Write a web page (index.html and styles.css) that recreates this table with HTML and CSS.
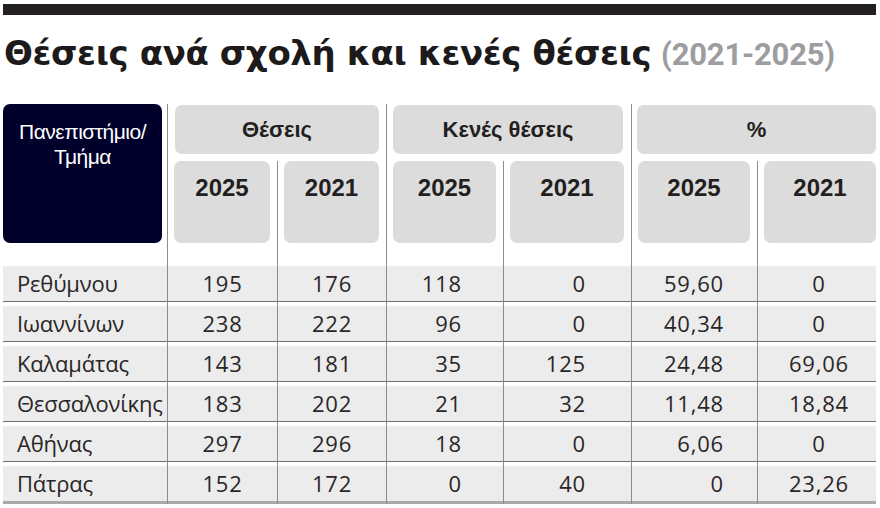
FILE: index.html
```html
<!DOCTYPE html>
<html lang="el">
<head>
<meta charset="utf-8">
<title>Θέσεις ανά σχολή και κενές θέσεις</title>
<link rel="stylesheet" href="styles.css">
</head>
<body>
<div class="page">
  <div class="topbar"></div>
  <h1 class="title"><span class="title-main">Θέσεις ανά σχολή και κενές θέσεις</span> <span class="years">(2021-2025)</span></h1>
  <div class="table">
    <div class="thead">
      <div class="h-uni"><div class="box navy">Πανεπιστήμιο/<br>Τμήμα</div></div>
      <div class="h-group"><div class="box group">Θέσεις</div></div>
      <div class="h-group"><div class="box group">Κενές θέσεις</div></div>
      <div class="h-group last-col"><div class="box group">%</div></div>
      <div class="h-year"><div class="box year">2025</div></div>
      <div class="h-year"><div class="box year">2021</div></div>
      <div class="h-year"><div class="box year">2025</div></div>
      <div class="h-year"><div class="box year">2021</div></div>
      <div class="h-year"><div class="box year">2025</div></div>
      <div class="h-year last-col"><div class="box year">2021</div></div>
    </div>
    <div class="row"><div class="c name">Ρεθύμνου</div><div class="c ctr">195</div><div class="c ctr">176</div><div class="c r4">118</div><div class="c r5">0</div><div class="c r6">59,60</div><div class="c c7">0</div></div>
    <div class="row"><div class="c name">Ιωαννίνων</div><div class="c ctr">238</div><div class="c ctr">222</div><div class="c r4">96</div><div class="c r5">0</div><div class="c r6">40,34</div><div class="c c7">0</div></div>
    <div class="row"><div class="c name">Καλαμάτας</div><div class="c ctr">143</div><div class="c ctr">181</div><div class="c r4">35</div><div class="c r5">125</div><div class="c r6">24,48</div><div class="c c7">69,06</div></div>
    <div class="row"><div class="c name">Θεσσαλονίκης</div><div class="c ctr">183</div><div class="c ctr">202</div><div class="c r4">21</div><div class="c r5">32</div><div class="c r6">11,48</div><div class="c c7">18,84</div></div>
    <div class="row"><div class="c name">Αθήνας</div><div class="c ctr">297</div><div class="c ctr">296</div><div class="c r4">18</div><div class="c r5">0</div><div class="c r6">6,06</div><div class="c c7">0</div></div>
    <div class="row row-last"><div class="c name">Πάτρας</div><div class="c ctr">152</div><div class="c ctr">172</div><div class="c r4">0</div><div class="c r5">40</div><div class="c r6">0</div><div class="c c7">23,26</div></div>
  </div>
</div>
</body>
</html>
```

FILE: styles.css
```css
* { box-sizing: border-box; }
html, body { margin: 0; padding: 0; background: #ffffff; }
body { width: 880px; height: 508px; overflow: hidden; font-family: "Open Sans", "DejaVu Sans", sans-serif; color: #231f20; }

.page { padding: 4px 4px 0 3px; }

.topbar { height: 11px; width: 873px; background: #231f20; }

.title {
  margin: 18px 0 0 1px;
  height: 71px;
  font-family: "DejaVu Sans", Roboto, sans-serif;
  font-weight: 700;
  font-size: 34px;
  line-height: 40px;
  white-space: nowrap;
  color: #1c1a1b;
}
.title-main { letter-spacing: -0.4px; }
.years { font-family: Roboto, "DejaVu Sans", sans-serif; color: #9d9d9f; font-size: 31px; margin-left: -2px; letter-spacing: -0.2px; }

.table { width: 873px; }

.thead, .row {
  display: grid;
  grid-template-columns: 164px 110px 109px 117px 128px 126px 119px;
}
.thead { grid-template-rows: 57px 105px; }

.h-uni { grid-row: 1 / span 2; grid-column: 1; padding: 0 5px 23px 0; }
.h-group { grid-row: 1; border-left: 1px solid #8c8c8c; padding: 1px 7px 7px 7px; }
.h-year { grid-row: 2; border-left: 1px solid #8c8c8c; padding: 0 7px 23px 6px; }
.h-group:nth-child(2) { grid-column: 2 / span 2; }
.h-group:nth-child(3) { grid-column: 4 / span 2; padding-left: 6px; padding-right: 8px; }
.h-group:nth-child(4) { grid-column: 6 / span 2; padding-left: 5px; }
.last-col { padding-right: 0; }

.box { height: 100%; border-radius: 7px; text-align: center; }
.navy {
  background: #00002a;
  color: #ffffff;
  font-family: "Liberation Sans Narrow", "Liberation Sans", sans-serif;
  font-size: 21px;
  line-height: 25px;
  padding-top: 15px;
  letter-spacing: -0.5px;
}
.group {
  background: #dcdcdd;
  font-family: "Liberation Sans Narrow", "Liberation Sans", sans-serif;
  font-weight: 700;
  font-size: 22px;
  line-height: 50px;
  color: #231f20;
}
.year {
  background: #dcdcdd;
  font-family: "Liberation Sans Narrow", "Liberation Sans", sans-serif;
  font-weight: 700;
  font-size: 24px;
  line-height: 30px;
  padding-top: 12px;
  color: #231f20;
}

.row {
  height: 40px;
  background: linear-gradient(to bottom, #ececec 0, #ececec 35px, #6f6f6f 35px, #6f6f6f 36px, #ffffff 36px, #ffffff 40px);
}
.row-last {
  height: 38px;
  background: linear-gradient(to bottom, #ececec 0, #ececec 35px, #a9a9a9 35px, #a9a9a9 38px);
}
.c {
  height: 100%;
  font-size: 22px;
  line-height: 35px;
  white-space: nowrap;
  color: #2a2627;
}
.c + .c { border-left: 1px solid #8c8c8c; letter-spacing: 0.8px; }
.name { padding-left: 14px; letter-spacing: -0.2px; }
.ctr { text-align: center; }
.r4 { text-align: right; padding-right: 41px; }
.r5 { text-align: right; padding-right: 45px; }
.r6 { text-align: right; padding-right: 33px; }
.c7 { text-align: center; padding-left: 4px; }
```
